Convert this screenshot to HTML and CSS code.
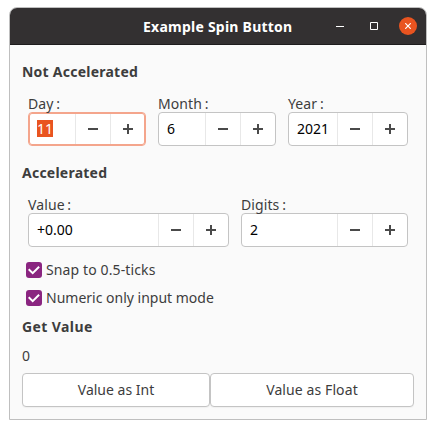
FILE: index.html
```html
<!DOCTYPE html>
<html lang="en">
<head>
<meta charset="utf-8">
<title>Example Spin Button</title>
<link rel="stylesheet" href="styles.css">
</head>
<body>
<svg class="defs" width="0" height="0">
  <symbol id="minus" viewBox="0 0 10 10"><path d="M0 4h10v2H0z"/></symbol>
  <symbol id="plus" viewBox="0 0 10 10"><path d="M0 4h4V0h2v4h4v2H6v4H4V6H0z"/></symbol>
  <symbol id="check" viewBox="0 0 16 16"><path d="M2.7 7.3l4 3.8 6.4-6.3" fill="none" stroke="#fff" stroke-width="2"/></symbol>
</svg>
<main class="window">
  <header class="titlebar">
    <h1 class="title">Example Spin Button</h1>
    <div class="controls">
      <svg class="minimize" width="8" height="10"><path d="M0 5h8v1H0z" fill="#fff"/></svg>
      <svg class="maximize" width="8" height="8"><path d="M.5.5h7v7h-7z" fill="none" stroke="#fff"/></svg>
      <span class="close"><svg width="6" height="6"><path d="M.2.2l5.6 5.6M5.8.2L.2 5.8" stroke="#fff" stroke-width="1.2"/></svg></span>
    </div>
  </header>
  <div class="content">
    <h2 class="heading">Not Accelerated</h2>
    <div class="fields">
      <div class="field day"><label>Day :</label>
        <div class="spin focus"><div class="entry"><span class="selected">11</span></div><button><svg><use href="#minus"/></svg></button><button><svg><use href="#plus"/></svg></button></div></div>
      <div class="field month"><label>Month :</label>
        <div class="spin"><div class="entry">6</div><button><svg><use href="#minus"/></svg></button><button><svg><use href="#plus"/></svg></button></div></div>
      <div class="field year"><label>Year :</label>
        <div class="spin"><div class="entry">2021</div><button><svg><use href="#minus"/></svg></button><button><svg><use href="#plus"/></svg></button></div></div>
    </div>
    <h2 class="heading accelerated">Accelerated</h2>
    <div class="fields">
      <div class="field value"><label>Value :</label>
        <div class="spin"><div class="entry">+0.00</div><button><svg><use href="#minus"/></svg></button><button><svg><use href="#plus"/></svg></button></div></div>
      <div class="field digits"><label>Digits :</label>
        <div class="spin"><div class="entry">2</div><button><svg><use href="#minus"/></svg></button><button><svg><use href="#plus"/></svg></button></div></div>
    </div>
    <div class="checks">
      <div class="check"><svg class="box"><use href="#check"/></svg><span class="snap">Snap to 0.5-ticks</span></div>
      <div class="check"><svg class="box"><use href="#check"/></svg><span>Numeric only input mode</span></div>
    </div>
    <h2 class="heading get">Get Value</h2>
    <div class="result">0</div>
    <div class="actions">
      <button class="action int">Value as Int</button>
      <button class="action float">Value as Float</button>
    </div>
  </div>
</main>
</body>
</html>
```

FILE: styles.css
```css
* { box-sizing: border-box; }
body { margin: 0; padding: 7px 9px 9px; background: #fff; color: #3d3d3d; font: 14px/20px "Noto Sans", "Open Sans", sans-serif; white-space: nowrap; }
.defs { position: absolute; }
svg { display: block; flex: none; }
h1, h2 { margin: 0; font-size: 14px; font-weight: 700; letter-spacing: .24px; }
button { padding: 0; border: 0; background: none; font: inherit; color: inherit; }
.window { width: 418px; height: 413px; border: 1px solid #bfbfbf; border-radius: 8px 8px 0 0; background: #fafafa; }
.titlebar { display: grid; grid-template-columns: 1fr auto; align-items: center; height: 37px; background: #333031; border-bottom: 1px solid #1e1c1d; border-radius: 7px 7px 0 0; color: #fff; }
.title { padding: 1px 0 0 133px; }
.controls { display: flex; align-items: center; padding-right: 9px; }
.minimize { margin-right: 26px; }
.maximize { margin-right: 21px; }
.close { display: grid; place-items: center; width: 18px; height: 18px; border-radius: 50%; background: #e95420; }
.content { padding: 17px 12px 0; }
.heading { height: 20px; }
.get { letter-spacing: .4px; }
.fields { display: flex; gap: 12px; margin: 11px 6px 0; }
.field label { display: block; height: 19px; line-height: 22px; letter-spacing: .1px; word-spacing: -1px; }
.day, .month { width: 118px; }
.year { width: 120px; }
.value { width: 201px; }
.digits { width: 167px; }
.spin { display: flex; height: 34px; border: 1px solid #c4c4c4; border-radius: 4px; background: #fff; color: #000; }
.focus { border-color: #f4a58c; box-shadow: inset 0 0 0 1px #f4a58c; }
.entry { flex: 1; min-width: 0; padding-left: 8px; line-height: 32px; }
.focus .entry { padding-top: 7px; line-height: 17px; }
.selected { display: block; width: 16px; height: 17px; background: #e95420; color: #fff; }
.spin button { display: grid; place-items: center; width: 35px; height: 32px; border-left: 1px solid #e8e8e8; fill: #4a4a4a; }
.focus button { height: 30px; margin-top: 1px; }
.spin svg { width: 10px; height: 10px; }
.accelerated { margin-top: 17px; }
.checks { display: grid; gap: 8px; margin: 13px 0 0 4px; }
.check { display: flex; align-items: center; gap: 4px; height: 20px; }
.snap { letter-spacing: .12px; }
.box { width: 16px; height: 16px; border-radius: 3px; background: #8a2580; }
.get { margin-top: 9px; }
.result { height: 20px; margin-top: 9px; }
.actions { display: flex; margin-top: 7px; }
.action { height: 34px; border: 1px solid #c4c4c4; border-radius: 4px; background: #fff; box-shadow: 0 1px 1px #0000000a; }
.int { width: 188px; }
.float { width: 204px; letter-spacing: .1px; }
```
